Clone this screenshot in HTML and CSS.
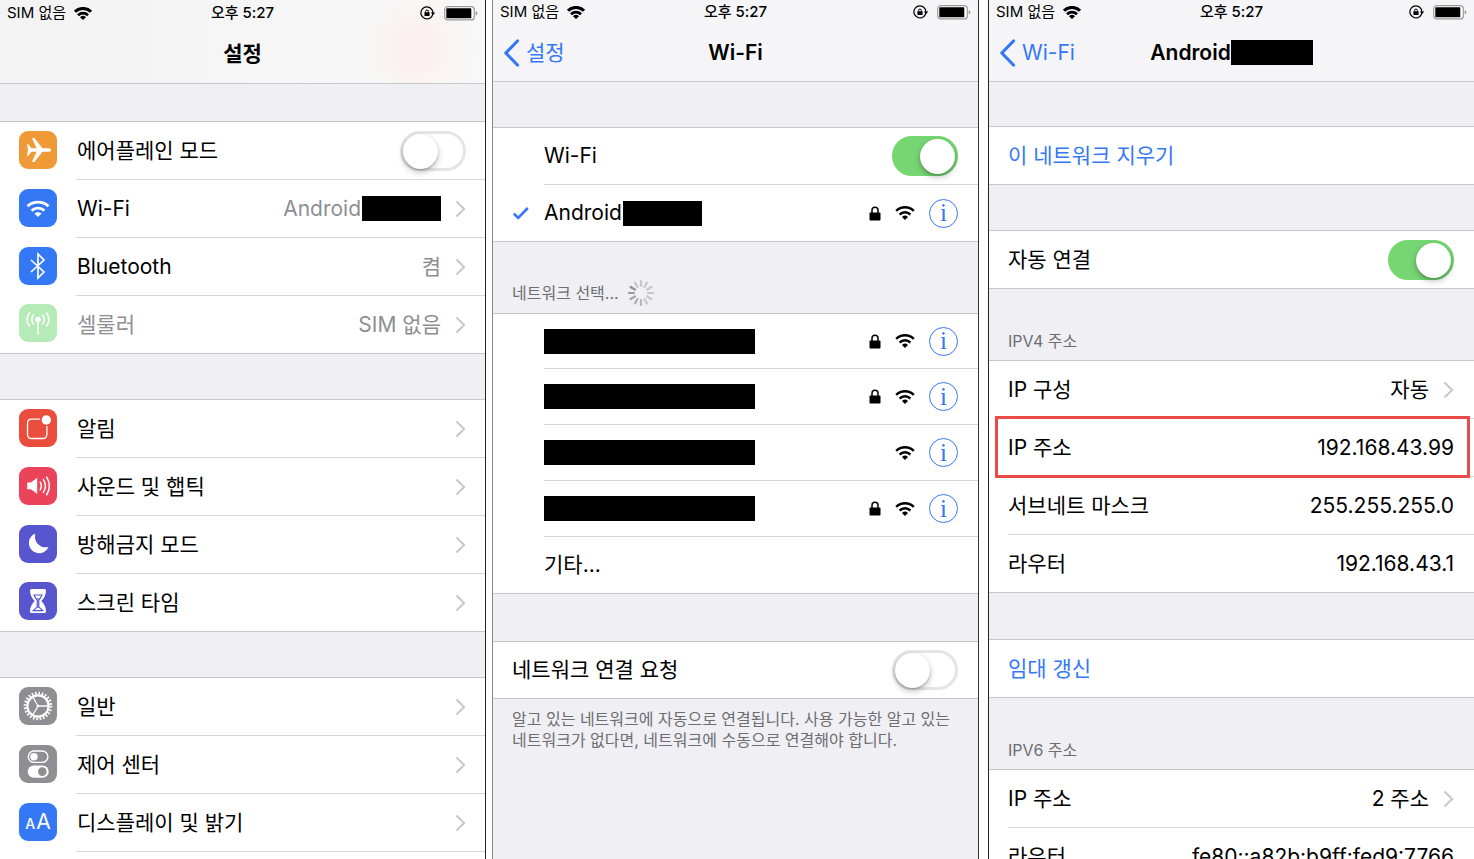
FILE: index.html
```html
<!DOCTYPE html>
<html lang="ko">
<head>
<meta charset="utf-8">
<meta name="viewport" content="width=device-width, initial-scale=1">
<title>설정</title>
<link rel="stylesheet" href="styles.css">
</head>
<body>
<svg class="sprite" aria-hidden="true">
  <symbol id="wifi" viewBox="0 0 20 14">
    <path d="M1.2 4.9a12.6 12.6 0 0 1 17.6 0" fill="none" stroke="currentColor" stroke-width="2.6"/>
    <path d="M4.6 8.5a7.8 7.8 0 0 1 10.8 0" fill="none" stroke="currentColor" stroke-width="2.5"/>
    <path d="M10 14 7 11a4.3 4.3 0 0 1 6 0z" fill="currentColor"/>
  </symbol>
  <symbol id="wifi-bold" viewBox="0 0 18 13">
    <path d="M1 4.7a11.4 11.4 0 0 1 16 0" fill="none" stroke="currentColor" stroke-width="3"/>
    <path d="M4 8.2a7.2 7.200 0 0 1 10 0" fill="none" stroke="currentColor" stroke-width="2.700"/>
    <path d="M9 13 6 10.200a4.300 4.300 0 0 1 6 0z" fill="currentColor"/>
  </symbol>
  <symbol id="lock" viewBox="0 0 12 15">
    <path d="M3 7V4.2a3 3 0 0 1 6 0V7" fill="none" stroke="currentColor" stroke-width="1.5"/>
    <rect x=".5" y="6.6" width="11" height="8" rx=".8" fill="currentColor"/>
  </symbol>
  <symbol id="chevron" viewBox="0 0 11 18">
    <path d="m1.5 1.5 7.6 7.5-7.6 7.5" fill="none" stroke="currentColor" stroke-width="2"/>
  </symbol>
  <symbol id="back" viewBox="0 0 17 28">
    <path d="M14.5 2 2.8 14l11.7 12" fill="none" stroke="currentColor" stroke-width="3.2" stroke-linecap="round" stroke-linejoin="round"/>
  </symbol>
  <symbol id="rotation" viewBox="0 0 16 14">
    <path d="M12.9 7.2A6 6 0 1 1 11.9 3.6 6 6 0 0 1 12.9 7M10.6 11.8A6 6 0 0 0 12.6 8.6" fill="none" stroke="currentColor" stroke-width="1.2"/>
    <path d="M10.8 6.4h4.4L13 9.2z" fill="currentColor"/>
    <path d="M5.6 6.8V5.5a1.4 1.4 0 0 1 2.8 0v1.3" fill="none" stroke="currentColor"/>
    <rect x="4.4" y="6.2" width="5.2" height="3.8" rx=".4" fill="currentColor"/>
  </symbol>
  <symbol id="battery" viewBox="0 0 34 15">
    <rect x=".7" y=".7" width="29.6" height="13.2" rx="3" fill="#fff" stroke="#999" stroke-width="1.2"/>
    <rect x="2.3" y="2.3" width="25" height="10" rx=".6" fill="#000"/>
    <path d="M31.7 5.2q1.7.6 1.7 2.2t-1.7 2.2z" fill="#999"/>
  </symbol>
</svg>

<main class="screens">

  <section class="screen screen-settings">
    <header class="header">
      <div class="status">
        <span class="carrier">SIM 없음 <svg class="wifi-small"><use href="#wifi-bold"/></svg></span>
        <span class="clock">오후 5:27</span>
        <span class="power"><svg class="rotation"><use href="#rotation"/></svg><svg class="battery"><use href="#battery"/></svg></span>
      </div>
      <nav class="nav"><h1 class="title">설정</h1></nav>
    </header>

    <div class="group">
      <label class="row">
        <svg class="app orange" viewBox="0 0 38 38"><path fill="#fff" d="M8 13.2h1.3l3.2 4h5.2L13.2 7.8q-.2-.9.6-.9h1.5l8.2 10.3H30q2.2.4 2.2 1.8T30 20.8h-6.5l-8.2 10.3h-1.5q-.8 0-.6-.9l4.5-9.4h-5.2l-3.2 4H8L9 19z"/></svg>
        <span class="body"><span class="label">에어플레인 모드</span><input class="switch" type="checkbox"></span>
      </label>
      <a class="row" href="#">
        <svg class="app blue" viewBox="0 0 38 38"><g fill="none" stroke="#fff" stroke-width="2.8"><path d="M8.5 17.2a15.6 15.6 0 0 1 21 0"/><path d="M12.6 21.6a9.6 9.6 0 0 1 12.8 0"/></g><path fill="#fff" d="m19 28-3.6-3.4a5.2 5.2 0 0 1 7.2 0z"/></svg>
        <span class="body"><span class="label">Wi-Fi</span><span class="value">Android<span class="redact redact-name"></span></span><svg class="chevron"><use href="#chevron"/></svg></span>
      </a>
      <a class="row" href="#">
        <svg class="app blue" viewBox="0 0 38 38"><path d="m12 13 13 12-6 6V7l6 6-13 12" fill="none" stroke="#fff" stroke-width="1.7"/></svg>
        <span class="body"><span class="label">Bluetooth</span><span class="value">켬</span><svg class="chevron"><use href="#chevron"/></svg></span>
      </a>
      <a class="row" href="#">
        <svg class="app mint" viewBox="0 0 38 38"><circle cx="19" cy="15.5" r="2.8" fill="#fff"/><g fill="none" stroke="#fff" stroke-width="1.7" stroke-linecap="round"><path d="M19 16v14"/><path d="M14.4 11.2a6.4 6.4 0 0 0 0 8.6M23.6 11.2a6.4 6.4 0 0 1 0 8.6M10.3 9.2a10 10 0 0 0 0 12.6M27.7 9.2a10 10 0 0 1 0 12.6"/></g></svg>
        <span class="body"><span class="label muted">셀룰러</span><span class="value">SIM 없음</span><svg class="chevron"><use href="#chevron"/></svg></span>
      </a>
    </div>

    <div class="group">
      <a class="row" href="#">
        <svg class="app red" viewBox="0 0 38 38"><path d="M21 10.1h-8.2q-4.3 0-4.3 4.3v10.8q0 4.3 4.3 4.3h10.800q4.300 0 4.300-4.300V17" fill="none" stroke="#fff" stroke-width="1.300"/><circle cx="27.300" cy="11" r="4.700" fill="#fff"/></svg>
        <span class="body"><span class="label">알림</span><svg class="chevron"><use href="#chevron"/></svg></span>
      </a>
      <a class="row" href="#">
        <svg class="app pink" viewBox="0 0 38 38"><path d="M8.2 15.4h3.6l6.4-4.6v16l-6.4-4.6H8.2z" fill="#fff"/><g fill="none" stroke="#fff" stroke-width="1.5" stroke-linecap="round"><path d="M21.2 15.2q2.4 3.8 0 7.6M24.4 12.6q4 6.4 0 12.8M27.6 10.2q5.6 8.8 0 17.6"/></g></svg>
        <span class="body"><span class="label">사운드 및 햅틱</span><svg class="chevron"><use href="#chevron"/></svg></span>
      </a>
      <a class="row" href="#">
        <svg class="app purple" viewBox="0 0 38 38"><path d="M16.3 8.6a10.2 10.2 0 1 0 13.3 13.2A10.7 10.7 0 0 1 16.3 8.6z" fill="#fff"/></svg>
        <span class="body"><span class="label">방해금지 모드</span><svg class="chevron"><use href="#chevron"/></svg></span>
      </a>
      <a class="row" href="#">
        <svg class="app purple" viewBox="0 0 38 38"><path d="M12.500 7h13q1.500 0 1.500 1.500 0 6-4.700 10.500 4.700 4.500 4.700 10.500 0 1.500-1.500 1.500h-13q-1.500 0-1.500-1.500 0-6 4.700-10.500Q11 14.500 11 8.500 11 7 12.500 7z" fill="#fff"/><path d="M15 13h8q-1.200 3-3.200 5v7l4 3.600h-9.600l4-3.600v-7q-2-2-3.200-5z" fill="none" stroke="#5756ce" stroke-width="1.100"/><path d="M19 16v10" stroke="#5756ce"/></svg>
        <span class="body"><span class="label">스크린 타임</span><svg class="chevron"><use href="#chevron"/></svg></span>
      </a>
    </div>

    <div class="group">
      <a class="row" href="#">
        <svg class="app gray" viewBox="0 0 38 38"><g fill="none" stroke="#fff"><circle cx="19" cy="19" r="12.8" stroke-width="3" stroke-dasharray="1.6 1.75"/><circle cx="19" cy="19" r="10.6" stroke-width="2.2"/><path d="M19 19h10M19 19l-5-8.7M19 19l-5 8.7" stroke-width="1.3"/></g><circle cx="19" cy="19" r="1.3" fill="#fff"/></svg>
        <span class="body"><span class="label">일반</span><svg class="chevron"><use href="#chevron"/></svg></span>
      </a>
      <a class="row" href="#">
        <svg class="app gray" viewBox="0 0 38 38"><rect x="9.3" y="6" width="19.6" height="11.4" rx="5.7" fill="none" stroke="#fff" stroke-width="1.4"/><circle cx="15" cy="11.7" r="3.7" fill="#fff"/><rect x="8.7" y="20.4" width="21" height="12.4" rx="6.2" fill="#fff"/><circle cx="23.3" cy="26.6" r="4.3" fill="#8e8e93"/></svg>
        <span class="body"><span class="label">제어 센터</span><svg class="chevron"><use href="#chevron"/></svg></span>
      </a>
      <a class="row" href="#">
        <span class="app blue letters"><span class="letter-small">A</span><span class="letter-large">A</span></span>
        <span class="body"><span class="label">디스플레이 및 밝기</span><svg class="chevron"><use href="#chevron"/></svg></span>
      </a>
      <div class="row"></div>
    </div>
  </section>

  <section class="screen screen-wifi">
    <header class="header">
      <div class="status">
        <span class="carrier">SIM 없음 <svg class="wifi-small"><use href="#wifi-bold"/></svg></span>
        <span class="clock">오후 5:27</span>
        <span class="power"><svg class="rotation"><use href="#rotation"/></svg><svg class="battery"><use href="#battery"/></svg></span>
      </div>
      <nav class="nav"><a class="back" href="#"><svg class="back-icon"><use href="#back"/></svg>설정</a><h1 class="title">Wi-Fi</h1></nav>
    </header>

    <div class="group">
      <label class="row">
        <span class="mark"></span>
        <span class="body"><span class="label">Wi-Fi</span><input class="switch" type="checkbox" checked></span>
      </label>
      <div class="row">
        <span class="mark"><svg class="check" viewBox="0 0 18 14"><path d="m1.8 7.6 4.4 4.4L15.8 2" fill="none" stroke="currentColor" stroke-width="2.6"/></svg></span>
        <div class="body"><span class="label">Android<span class="redact redact-name"></span></span><svg class="lock"><use href="#lock"/></svg><svg class="wifi"><use href="#wifi"/></svg><button class="info" type="button">i</button></div>
      </div>
    </div>

    <h2 class="caption">네트워크 선택...
      <svg class="spinner" viewBox="-14 -14 28 28"><g stroke-width="2.2" stroke-linecap="round" stroke="#c8c8cc"><path d="M0-7v-5"/><path d="M0-7v-5" transform="rotate(30)"/><path d="M0-7v-5" transform="rotate(60)"/><path d="M0-7v-5" transform="rotate(90)"/><path d="M0-7v-5" transform="rotate(120)"/><path d="M0-7v-5" transform="rotate(150)"/><path d="M0-7v-5" transform="rotate(180)" stroke="#b8b8bc"/><path d="M0-7v-5" transform="rotate(210)" stroke="#aeaeb2"/><path d="M0-7v-5" transform="rotate(240)" stroke="#a4a4a8"/><path d="M0-7v-5" transform="rotate(270)" stroke="#9a9a9e"/><path d="M0-7v-5" transform="rotate(300)" stroke="#909094"/><path d="M0-7v-5" transform="rotate(330)"/></g></svg>
    </h2>

    <div class="group networks">
      <div class="row"><span class="mark"></span><div class="body"><span class="label"><span class="redact"></span></span><svg class="lock"><use href="#lock"/></svg><svg class="wifi"><use href="#wifi"/></svg><button class="info" type="button">i</button></div></div>
      <div class="row"><span class="mark"></span><div class="body"><span class="label"><span class="redact"></span></span><svg class="lock"><use href="#lock"/></svg><svg class="wifi"><use href="#wifi"/></svg><button class="info" type="button">i</button></div></div>
      <div class="row"><span class="mark"></span><div class="body"><span class="label"><span class="redact"></span></span><svg class="wifi"><use href="#wifi"/></svg><button class="info" type="button">i</button></div></div>
      <div class="row"><span class="mark"></span><div class="body"><span class="label"><span class="redact"></span></span><svg class="lock"><use href="#lock"/></svg><svg class="wifi"><use href="#wifi"/></svg><button class="info" type="button">i</button></div></div>
      <a class="row" href="#"><span class="mark"></span><span class="body"><span class="label">기타...</span></span></a>
    </div>

    <div class="group">
      <label class="row"><span class="body"><span class="label">네트워크 연결 요청</span><input class="switch" type="checkbox"></span></label>
    </div>
    <p class="note">알고 있는 네트워크에 자동으로 연결됩니다. 사용 가능한 알고 있는 네트워크가 없다면, 네트워크에 수동으로 연결해야 합니다.</p>
  </section>

  <section class="screen screen-detail">
    <header class="header">
      <div class="status">
        <span class="carrier">SIM 없음 <svg class="wifi-small"><use href="#wifi-bold"/></svg></span>
        <span class="clock">오후 5:27</span>
        <span class="power"><svg class="rotation"><use href="#rotation"/></svg><svg class="battery"><use href="#battery"/></svg></span>
      </div>
      <nav class="nav"><a class="back" href="#"><svg class="back-icon"><use href="#back"/></svg>Wi-Fi</a><h1 class="title">Android<span class="redact redact-title"></span></h1></nav>
    </header>

    <div class="group">
      <button class="row action" type="button"><span class="body"><span class="label">이 네트워크 지우기</span></span></button>
    </div>
    <div class="group">
      <label class="row"><span class="body"><span class="label">자동 연결</span><input class="switch" type="checkbox" checked></span></label>
    </div>

    <h2 class="caption">IPV4 주소</h2>
    <div class="group">
      <a class="row" href="#"><span class="body"><span class="label">IP 구성</span><span class="value">자동</span><svg class="chevron"><use href="#chevron"/></svg></span></a>
      <div class="row highlighted"><div class="body"><span class="label">IP 주소</span><span class="value">192.168.43.99</span></div></div>
      <div class="row"><div class="body"><span class="label">서브네트 마스크</span><span class="value">255.255.255.0</span></div></div>
      <div class="row"><div class="body"><span class="label">라우터</span><span class="value">192.168.43.1</span></div></div>
    </div>

    <div class="group">
      <button class="row action" type="button"><span class="body"><span class="label">임대 갱신</span></span></button>
    </div>

    <h2 class="caption">IPV6 주소</h2>
    <div class="group">
      <a class="row" href="#"><span class="body"><span class="label">IP 주소</span><span class="value">2 주소</span><svg class="chevron"><use href="#chevron"/></svg></span></a>
      <div class="row"><div class="body"><span class="label">라우터</span><span class="value">fe80::a82b:b9ff:fed9:7766</span></div></div>
    </div>
  </section>

</main>
</body>
</html>
```
FILE: styles.css
```css
* { box-sizing: border-box; }

body {
  margin: 0;
  background: #fff;
  color: #000;
  font-family: Inter, "Noto Sans CJK KR", sans-serif;
  font-size: 21px;
  line-height: 28px;
}

.sprite { position: absolute; width: 0; height: 0; }
svg { display: block; flex: none; }
a { color: inherit; text-decoration: none; }

.screens { display: flex; height: 100vh; }

.screen {
  flex: 1;
  min-width: 0;
  background: #efeff4;
  overflow-y: auto;
  scrollbar-width: none;
  --row: 58px;
  --gap: 45px;
  --edge: 20px;
}
.screen-settings { border-right: 1px solid #222; --edge: 19px; }
.screen-wifi {
  margin-left: 6px;
  border-left: 1px solid #888;
  border-right: 1px solid #333;
  --row: 57px;
}
.screen-detail { margin-left: 9px; border-left: 1px solid #222; }

/* Header */
.header { background: #f5f5f7; border-bottom: 1px solid #c8c7cc; }
.screen-settings .header {
  padding-top: 1px;
  background: radial-gradient(circle 60px at 86% 58%, #fcefee, #f7f7f700), linear-gradient(90deg, #f3f3f3, #f8f8f8);
}
.status {
  display: grid;
  grid-template-columns: 1fr auto 1fr;
  align-items: center;
  height: 24px;
  padding: 0 7px;
  font-size: 15px;
  line-height: 24px;
}
.carrier, .power { display: flex; align-items: center; gap: 8px; }
.power { justify-content: flex-end; }
.clock { font-weight: 500; }
.wifi-small { width: 18px; height: 13px; }
.rotation { width: 16px; height: 14px; }
.battery { width: 34px; height: 15px; }

.nav {
  display: grid;
  grid-template-columns: 1fr auto 1fr;
  align-items: center;
  height: 57px;
  padding: 0 10px;
}
.screen-settings .nav { height: 58px; }
.back { display: flex; align-items: center; gap: 6px; color: #3478f6; }
.back-icon { width: 17px; height: 28px; }
.title { grid-column: 2; margin: 0; font-size: 21px; font-weight: 600; line-height: 28px; display: flex; align-items: center; }

/* Grouped rows */
.group { margin-top: var(--gap); background: #fff; border-top: 1px solid #c8c7cc; }
.screen-settings .header + .group { margin-top: 37px; }
.screen-detail .header + .group { margin-top: 44px; }
.caption + .group { margin-top: 0; }
.caption + .group + .group { margin-top: 46px; }
.networks + .group { --gap: 47px; }

.row {
  display: flex;
  align-items: center;
  width: 100%;
  min-height: var(--row);
  padding-left: 19px;
}
.body {
  display: flex;
  flex: 1;
  align-items: center;
  align-self: stretch;
  gap: 14px;
  min-width: 0;
  padding-right: var(--edge);
  border-bottom: 1px solid #d6d5d9;
}
.row:last-child { border-bottom: 1px solid #c8c7cc; }
.row:last-child .body { border-bottom: 0; }
.label { display: flex; align-items: center; flex: 1; white-space: nowrap; }
.screen-settings .label { padding-left: 1px; }
.value { display: flex; align-items: center; white-space: nowrap; }
.screen-settings .value { color: #8e8e93; }
.screen-settings .muted { color: #8e8e93; }
.chevron { width: 11px; height: 18px; color: #c7c7cc; }

.networks { --row: 56px; border-top: 0; }
.networks .row:first-child { border-top: 1px solid #c8c7cc; }
.networks .row:last-child { --row: 57px; }

.action {
  margin: 0;
  padding: 0 0 0 19px;
  border: 0;
  background: none;
  color: #3478f6;
  font: inherit;
  text-align: left;
}

.highlighted { position: relative; }
.highlighted::after {
  content: "";
  position: absolute;
  inset: -3px 4px -1px 6px;
  border: 3px solid #e94b46;
}

.redact { width: 211px; height: 25px; background: #000; }
.redact-name { width: 79px; margin-left: 1px; }
.redact-title { width: 82px; }

/* Row icons */
.app { flex: none; width: 38px; height: 38px; margin: 0 19px 3px 0; border-radius: 9px; }
.orange { background: #f09a37; }
.blue { background: #3478f6; }
.mint { background: #b5ebb7; }
.red { background: #eb4d3d; }
.pink { background: #eb445a; }
.purple { background: #5756ce; }
.gray { background: #8e8e93; }
.letters { display: flex; align-items: baseline; justify-content: center; gap: 1px; color: #fff; line-height: 38px; }
.letter-small { font-size: 14px; font-weight: 500; }
.letter-large { font-size: 21px; }

.mark { flex: none; width: 32px; }
.check { width: 18px; height: 14px; color: #3478f6; }
.lock { width: 12px; height: 15px; }
.wifi { width: 20px; height: 14px; }
.info {
  flex: none;
  width: 29px;
  height: 29px;
  padding: 0;
  border: 1px solid #3478f6;
  border-radius: 50%;
  background: none;
  color: #3478f6;
  font: 25px/26px "Liberation Serif", serif;
}

/* Switch */
.switch {
  appearance: none;
  flex: none;
  width: 66px;
  height: 40px;
  margin: 0;
  padding: 0;
  border: 3px solid #e5e5e5;
  border-radius: 20px;
  background: #fff;
}
.switch::before {
  content: "";
  display: block;
  width: 35px;
  height: 35px;
  border-radius: 50%;
  background: #fff;
  box-shadow: 0 3px 6px rgba(0, 0, 0, .25), 0 1px 2px rgba(0, 0, 0, .2);
}
.switch:checked { border-color: #76d672; background: #76d672; }
.switch:checked::before { margin-left: auto; }

/* Captions and notes */
.caption {
  display: flex;
  align-items: flex-end;
  gap: 8px;
  min-height: 71px;
  margin: 0;
  padding: 0 19px 8px;
  color: #6d6d72;
  font-size: 16px;
  font-weight: 400;
  line-height: 22px;
}
.screen-wifi .caption { align-items: center; padding-top: 30px; padding-bottom: 0; }
.networks + .group.group { margin-top: var(--gap); }
.spinner { width: 28px; height: 28px; }
.note { margin: 10px 19px; color: #6d6d72; font-size: 16px; line-height: 21px; }
```
